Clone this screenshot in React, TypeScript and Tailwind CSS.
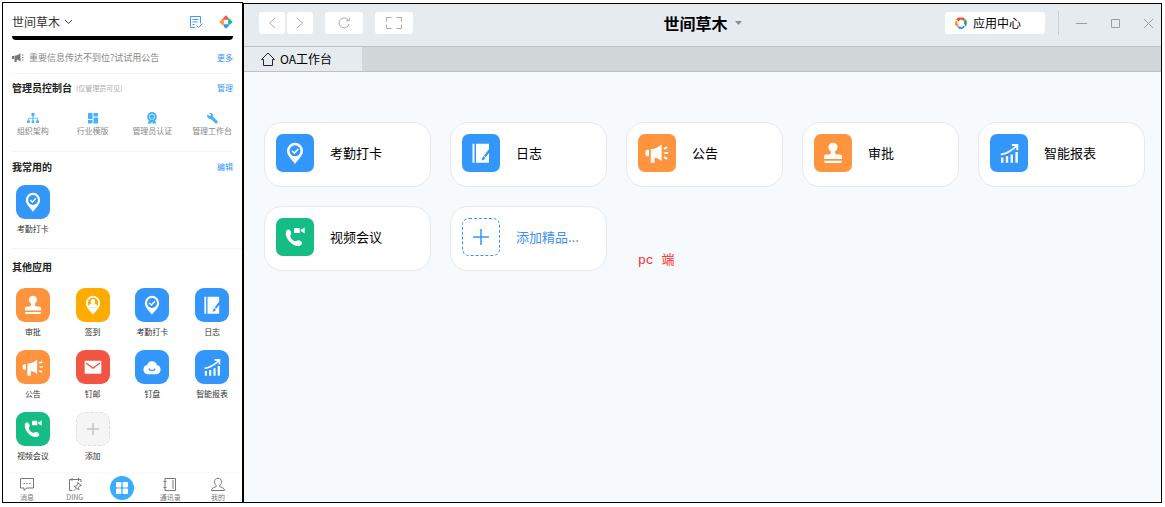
import React, { useState } from "react";

type AppKey =
  | "attendance"
  | "log"
  | "notice"
  | "approval"
  | "report"
  | "meeting"
  | "signin"
  | "mail"
  | "drive";

interface AppItem {
  key: AppKey;
  name: string;
}

const tileColors: Record<AppKey, string> = {
  attendance: "bg-[#3296fa]",
  log: "bg-[#3296fa]",
  report: "bg-[#3296fa]",
  drive: "bg-[#3296fa]",
  notice: "bg-[#ff943e]",
  approval: "bg-[#ff943e]",
  signin: "bg-[#ffab00]",
  mail: "bg-[#f25643]",
  meeting: "bg-[#15bc83]",
};

const pinPath = "M19 30c-3-4.5-8-8-8-13.2a8 8 0 0 1 16 0c0 5.2-5 8.7-8 13.2z";

const glyphs: Record<AppKey, React.ReactNode> = {
  attendance: (
    <>
      <path d={pinPath} fill="#fff" />
      <circle cx="19" cy="16.8" r="5.5" fill="#3296fa" />
      <path d="M16 16.8l2.3 2.3 4-4.2" fill="none" stroke="#fff" strokeWidth="1.5" />
    </>
  ),
  signin: (
    <>
      <path d={pinPath} fill="#fff" />
      <circle cx="19" cy="16.5" r="5.8" fill="#ffab00" />
      <circle cx="19" cy="14.8" r="2.5" fill="#fff" />
      <path d="M14.5 20.5c.6-3 2.3-3.7 4.5-3.7s3.900.7 4.500 3.700c-2.400 2.200-6.600 2.200-9 0z" fill="#fff" />
    </>
  ),
  log: (
    <>
      <path d="M10.5 9.800h2v19h-2zM14 9.800h13v19H14z" fill="#fff" />
      <path d="M27.5 14.500l-5.600 7.200 1.800 1.500 4.800-6.200z" fill="#3296fa" />
      <path d="M21.200 22.300l2.100 1.700c-.5 1.600-2 2.400-4 2.300 1.200-.8.8-2.700 1.900-4z" fill="#3296fa" />
    </>
  ),
  notice: (
    <>
      <path d="M11 15.8v6.4H9.500a2 2 0 0 1-2-2v-2.400a2 2 0 0 1 2-2z" fill="#fff" />
      <path d="M12.8 15.200c4.500-.2 7.700-2 10.800-4.700v16.700c-2.300-2-4.300-3.300-7-3.700v5.200h-3.800z" fill="#fff" />
      <path d="M26 14.800l3.300-1.700M26.500 19H30M26 23.200l3.300 1.700" stroke="#fff" strokeWidth="1.9" />
    </>
  ),
  approval: (
    <>
      <path
        d="M19 8.700a4.500 4.500 0 0 1 2.700 8.100c-.9.700-.8 2.900.4 3.800H26a2 2 0 0 1 2 2v2.500H10v-2.500a2 2 0 0 1 2-2h3.900c1.200-.9 1.300-3.100.4-3.800A4.500 4.500 0 0 1 19 8.700z"
        fill="#fff"
      />
      <path d="M10.300 26.800h17.400V28a1 1 0 0 1-1 1H11.300a1 1 0 0 1-1-1z" fill="#fff" />
    </>
  ),
  report: (
    <>
      <path d="M12.2 28.800v-5.200M17 28.800v-6.500M21.800 28.800v-8.300M26.600 28.800V18" stroke="#fff" strokeWidth="2.4" />
      <path d="M10.800 20.500c6.200-.9 11-4.100 15.500-8.400M21.800 11h5.500v5.200" fill="none" stroke="#fff" strokeWidth="1.9" />
    </>
  ),
  meeting: (
    <>
      <path
        d="M9.800 14.300c.2-1.600 1.500-2.800 2.800-2.700 1.300 0 2.400 1.900 2.700 3.500.3 1.500-1.200 2-1 3.300.4 2 2.800 4.300 4.800 4.800 1.400.3 2-1.200 3.500-.9 1.600.3 3.500 1.500 3.500 2.800s-1.400 2.700-3 2.900c-6.300.9-14-6.900-13.300-13.700z"
        fill="#fff"
      />
      <path d="M18 9.900h5.800v5H18zM24.800 11.800l3.900-2.400v6l-3.900-2.400z" fill="#fff" />
    </>
  ),
  mail: (
    <>
      <rect x="9.7" y="12" width="18.6" height="14.5" rx="1" fill="#fff" />
      <path d="M11.200 14.500L19 20.300l7.800-5.800" fill="none" stroke="#f25643" strokeWidth="1.5" />
    </>
  ),
  drive: (
    <>
      <path
        d="M13.600 16.800a5.600 5.600 0 0 1 10.800 0 5.300 5.300 0 0 1-.3 10.400H13.900a5.300 5.300 0 0 1-.3-10.400z"
        fill="#fff"
      />
      <path d="M15.500 20.800c1.300 3 5.700 3 7 0" fill="none" stroke="#3296fa" strokeWidth="1.5" />
    </>
  ),
};

const deskApps: AppItem[] = [
  { key: "attendance", name: "考勤打卡" },
  { key: "log", name: "日志" },
  { key: "notice", name: "公告" },
  { key: "approval", name: "审批" },
  { key: "report", name: "智能报表" },
  { key: "meeting", name: "视频会议" },
];

const otherApps: AppItem[] = [
  { key: "approval", name: "审批" },
  { key: "signin", name: "签到" },
  { key: "attendance", name: "考勤打卡" },
  { key: "log", name: "日志" },
  { key: "notice", name: "公告" },
  { key: "mail", name: "钉邮" },
  { key: "drive", name: "钉盘" },
  { key: "report", name: "智能报表" },
  { key: "meeting", name: "视频会议" },
];

const consoleItems = [
  {
    name: "组织架构",
    icon: (
      <path d="M4.500 1h3v3h-3zM5.500 4h1v1.700h4.200V8.500h1.300v2.500H9.200V8.500h.6V6.600H6.500v1.900h.8V11H4.700V8.500h.8V6.600H2.200v1.900h.6V11H0V8.500h1.300V5.700h4.200z" />
    ),
  },
  {
    name: "行业模版",
    icon: <path d="M1 1h4.500v6H1zM1 8h4.500v3.500H1zM6.500 1H11v3.500H6.500zM6.500 5.500H11v6H6.500z" />,
  },
  {
    name: "管理员认证",
    icon: (
      <>
        <path d="M3 7.500L1.800 12l2.100-.8 1.300.8.8-2.500.8 2.500 1.300-.8 2.100.8L9 7.500z" />
        <circle cx="6" cy="4.8" r="4.8" />
        <circle cx="6" cy="4.8" r="2.7" fill="none" stroke="#fff" strokeWidth=".6" />
      </>
    ),
  },
  {
    name: "管理工作台",
    icon: (
      <path d="M1.200 2.200L3.300 4l1.300-.2.300-1.300L3.200.9c1.900-.5 3.900.8 4 2.900l-.1 1 4.100 4a1.500 1.500 0 0 1-2.100 2.200l-4.300-4C2.600 7.500.6 5 1.200 2.200z" />
    ),
  },
];

const navItems = [
  {
    name: "消息",
    icon: (
      <>
        <path d="M1.500 1.500h13v9.500H8l-3 2.300V11H1.500z" />
        <path d="M4.500 6.500h1.400M7.300 6.500h1.400M10.100 6.500h1.400" />
      </>
    ),
  },
  {
    name: "DING",
    icon: (
      <>
        <path d="M5.500 13.500h-3V2.500h11.500v2.500M5 1v3M11.500 1v3" />
        <path d="M10.700 5.500l3.800 3-1.700.3-1.200 1.700.3 2.500-4.700-3.700 2.300-.4 1.200-1.700zM9.300 11.200l-2.300 2.500" />
      </>
    ),
  },
  { name: "", icon: null },
  {
    name: "通讯录",
    icon: <path d="M3 1.500h10.500v12H3zM11 3v9M1.500 4.500h3M1.500 10.500h3" />,
  },
  {
    name: "我的",
    icon: (
      <path d="M1.500 13.500h13c-.2-2.200-1.500-2.800-4.700-3.900V8.300c1.300-.9 1.800-2.100 1.800-3.500C11.600 2.600 10 1.300 8 1.300S4.400 2.600 4.400 4.800c0 1.400.5 2.600 1.800 3.500v1.300c-3.200 1.100-4.500 1.700-4.700 3.900z" />
    ),
  },
];

const AppTile: React.FC<{ app: AppKey; className: string }> = ({ app, className }) => (
  <span className={`block shrink-0 ${tileColors[app]} ${className}`}>
    <svg viewBox="0 0 38 38" className="h-full w-full" aria-hidden="true">
      {glyphs[app]}
    </svg>
  </span>
);

const MobileApp: React.FC<{ item: AppItem }> = ({ item }) => (
  <button className="flex flex-col items-center gap-1">
    <AppTile app={item.key} className="size-[34px] rounded-[9px]" />
    <span className="text-[8px] leading-3 text-[#333]">{item.name}</span>
  </button>
);

const MobilePanel: React.FC = () => {
  const [active, setActive] = useState(2);

  return (
    <section className="flex flex-col border border-black bg-white">
      <header className="flex h-[33px] items-center px-[9px] pt-1">
        <button className="flex items-center gap-1 text-xs leading-4 text-[#333]">
          世间草木
          <svg width="9" height="6" viewBox="0 0 9 6" fill="none" stroke="#444" aria-hidden="true">
            <path d="M1 1l3.500 3.500L8 1" />
          </svg>
        </button>
        <button className="ml-auto" aria-label="待办">
          <svg width="14" height="14" viewBox="0 0 14 14" fill="none" stroke="#3f9bf5" aria-hidden="true">
            <path d="M6 12.500H1.500v-11h10v7M3.500 4.500h6M3.500 7h5M3.500 9.500h2M7.500 10.500l2 2 4-4" />
          </svg>
        </button>
        <button className="ml-4" aria-label="应用中心">
          <svg width="14" height="14" viewBox="0 0 14 14" aria-hidden="true">
            <path d="M7 .3l2 2v2.500H2.500z" fill="#f25643" />
            <path d="M13.700 7l-2 2H9.200V2.500z" fill="#15bc83" />
            <path d="M7 13.700l-2-2V9.200h6.500z" fill="#3296fa" />
            <path d="M.3 7l2-2h2.500v6.500z" fill="#ff943e" />
          </svg>
        </button>
      </header>
      <div className="mx-[9px] h-1 rounded-b-[4px] bg-black" />

      <div className="mx-[9px] flex h-[34px] items-center border-b border-[#f2f3f4] pt-0.5">
        <svg width="13" height="9" viewBox="0 0 13 9" fill="#777" aria-hidden="true">
          <path d="M0 3h2v3H0zM2.500 2.700C5 2.500 6.500 1.500 8.500.2v8.300C7 7.500 6 6.800 4.700 6.500V9H2.500z" />
          <path d="M10 1.500h1.500v1H10zM10 4h1.500v1H10zM10 6.500h1.500v1H10z" />
        </svg>
        <p className="ml-1 text-[9px] leading-3 text-[#888]">重要信息传达不到位?试试用公告</p>
        <a href="#more" className="ml-auto text-[8px] leading-3 text-[#3296fa]">更多</a>
      </div>

      <div className="mx-[9px] flex h-7 items-center">
        <h2 className="text-[10px] leading-4 font-bold text-[#222]">管理员控制台</h2>
        <span className="ml-1 text-[7px] leading-3 text-[#aaa]">(仅管理员可见)</span>
        <a href="#manage" className="ml-auto text-[8px] leading-3 text-[#3296fa]">管理</a>
      </div>
      <div className="grid grid-cols-4 pt-2.5">
        {consoleItems.map((item) => (
          <button key={item.name} className="flex flex-col items-center gap-px">
            <svg width="12" height="12" viewBox="0 0 12 12" fill="#43b3fa" aria-hidden="true">
              {item.icon}
            </svg>
            <span className="text-[8px] leading-3 text-[#888]">{item.name}</span>
          </button>
        ))}
      </div>

      <div className="mx-[9px] mt-3.5 flex h-[30px] items-center border-t border-[#f2f3f4]">
        <h2 className="text-[10px] leading-4 font-bold text-[#222]">我常用的</h2>
        <a href="#edit" className="ml-auto text-[8px] leading-3 text-[#3296fa]">编辑</a>
      </div>
      <div className="grid grid-cols-4 pt-1">
        <MobileApp item={{ key: "attendance", name: "考勤打卡" }} />
      </div>

      <div className="mt-[13px] ml-[9px] flex h-9 items-center border-t border-[#f2f3f4]">
        <h2 className="text-[10px] leading-4 font-bold text-[#222]">其他应用</h2>
      </div>
      <div className="grid grid-cols-4 gap-y-3 pt-1">
        {otherApps.map((item) => (
          <MobileApp key={item.name} item={item} />
        ))}
        <button className="flex flex-col items-center gap-1">
          <span className="flex size-[34px] items-center justify-center rounded-[9px] border border-dashed border-[#ddd] bg-[#f5f5f5]">
            <svg width="14" height="14" viewBox="0 0 14 14" stroke="#c4c4c4" strokeWidth="1.5" aria-hidden="true">
              <path d="M7 1v12M1 7h12" />
            </svg>
          </span>
          <span className="text-[8px] leading-3 text-[#333]">添加</span>
        </button>
      </div>

      <nav className="mt-auto grid grid-cols-5 border-t border-[#fafafa]">
        {navItems.map((item, index) =>
          item.icon ? (
            <button
              key={index}
              onClick={() => setActive(index)}
              className={`flex flex-col items-center pt-1 text-[7px] leading-[10px] ${
                active === index ? "text-[#3296fa]" : "text-[#777]"
              }`}
            >
              <svg width="16" height="15" viewBox="0 0 16 15" fill="none" stroke="currentColor" aria-hidden="true">
                {item.icon}
              </svg>
              {item.name}
            </button>
          ) : (
            <button
              key={index}
              onClick={() => setActive(index)}
              aria-label="工作台"
              className="flex items-center justify-center"
            >
              <span className="flex size-6 items-center justify-center rounded-full bg-[#38adff]">
                <svg width="12" height="12" viewBox="0 0 12 12" fill="#fff" aria-hidden="true">
                  <rect width="5.4" height="5.4" rx=".8" />
                  <rect x="6.6" width="5.4" height="5.4" rx=".8" />
                  <rect y="6.6" width="5.4" height="5.4" rx=".8" />
                  <rect x="6.6" y="6.6" width="5.4" height="5.4" rx=".8" />
                </svg>
              </span>
            </button>
          )
        )}
      </nav>
    </section>
  );
};

const toolButton = "flex h-[22px] items-center justify-center rounded-[3px] bg-white";

const DesktopPanel: React.FC = () => (
  <section className="mt-px flex flex-col border border-black bg-[#f6fafd]">
    <header className="grid h-[42px] grid-cols-[1fr_auto_1fr] items-center bg-[#e6ebef] pb-1">
      <div className="flex items-center pl-[15px]">
        <button className={`${toolButton} w-[26px]`} aria-label="后退">
          <svg width="8" height="12" viewBox="0 0 8 12" fill="none" stroke="#aaa" aria-hidden="true">
            <path d="M7 1L1.500 6 7 11" />
          </svg>
        </button>
        <button className={`${toolButton} ml-0.5 w-[26px]`} aria-label="前进">
          <svg width="8" height="12" viewBox="0 0 8 12" fill="none" stroke="#aaa" aria-hidden="true">
            <path d="M1 1l5.500 5L1 11" />
          </svg>
        </button>
        <button className={`${toolButton} ml-3 w-[38px]`} aria-label="刷新">
          <svg width="12" height="12" viewBox="0 0 12 12" fill="none" stroke="#aaa" aria-hidden="true">
            <path d="M11 7A5 5 0 1 1 10 2.800M11.200.5v3.300H8" />
          </svg>
        </button>
        <button className={`${toolButton} ml-3 w-[38px]`} aria-label="全屏">
          <svg width="16" height="12" viewBox="0 0 16 12" fill="none" stroke="#aaa" aria-hidden="true">
            <path d="M5.500.5h-5v4M10.500.5h5v4M.5 7.500v4h5M15.500 7.500v4h-5" />
          </svg>
        </button>
      </div>
      <button className="flex items-center gap-[7px] text-base leading-5 font-bold text-black">
        世间草木
        <svg width="7" height="4" viewBox="0 0 7 4" fill="#888e94" aria-hidden="true">
          <path d="M0 0h7L3.500 4z" />
        </svg>
      </button>
      <div className="flex items-center justify-end pr-[7px]">
        <button className="flex h-[22px] w-[100px] items-center gap-[5px] rounded-[3px] bg-white pl-[9px] text-xs text-black">
          <svg width="14" height="14" viewBox="0 0 14 14" aria-hidden="true">
            <path d="M4 1.500h5.500l2 2.800H8L6.800 3.300 4.500 5.500 2.300 3.500z" fill="#ec4a3a" />
            <path d="M10 2l2.700 2.800v4l-2 2.200V8.500l-1-1.300L10.500 6 9 4.500h2.500z" fill="#15a866" />
            <path d="M10.800 11l-2.300 2H5.200l-2-2.500h3L7.500 11.500l2-2z" fill="#3296fa" />
            <path d="M1.500 4.500l2.300 1.300-.5 2 1.500 1L4.500 10 3 11 .8 8.500z" fill="#ff943e" />
          </svg>
          应用中心
        </button>
        <span className="ml-[13px] h-6 w-px bg-[#cbd0d4]" />
        <button className="ml-[17px]" aria-label="最小化">
          <svg width="11" height="11" viewBox="0 0 11 11" stroke="#999ea3" aria-hidden="true">
            <path d="M0 5.500h11" />
          </svg>
        </button>
        <button className="ml-[23px]" aria-label="最大化">
          <svg width="11" height="11" viewBox="0 0 11 11" fill="none" stroke="#999ea3" aria-hidden="true">
            <path d="M1.500 1.500h8v8h-8z" />
          </svg>
        </button>
        <button className="ml-[22px]" aria-label="关闭">
          <svg width="11" height="11" viewBox="0 0 11 11" stroke="#999ea3" aria-hidden="true">
            <path d="M1 1l9 9M10 1l-9 9" />
          </svg>
        </button>
      </div>
    </header>

    <div className="flex h-[26px] border-y border-[#bcc1c4] bg-[#d2d7da]">
      <a href="#oa" className="flex w-[118px] items-center gap-[5px] bg-[#e6ebef] pl-[17px] text-xs text-black">
        <svg width="14" height="14" viewBox="0 0 14 14" fill="none" stroke="#223" aria-hidden="true">
          <path d="M.5 7.500L7 1l6.500 6.500h-2v6h-9v-6z" />
        </svg>
        OA工作台
      </a>
    </div>

    <div className="grid grid-cols-[167fr_157fr_157fr_157fr_167fr] gap-[19px] px-5 pt-[50px] pr-4">
      {deskApps.map((item) => (
        <button
          key={item.key}
          className="flex h-[65px] items-center gap-4 rounded-[18px] border border-[#e5e9ed] bg-white pb-[3px] pl-[11px] text-[13px] text-black"
        >
          <AppTile app={item.key} className="size-[38px] rounded-[7px]" />
          {item.name}
        </button>
      ))}
      <button className="flex h-[65px] items-center gap-4 rounded-[18px] border border-[#e5e9ed] bg-white pb-[3px] pl-[11px] text-[13px] text-[#3f8ff5]">
        <span className="flex size-[38px] items-center justify-center rounded-[7px] border border-dashed border-[#3296fa]">
          <svg width="18" height="18" viewBox="0 0 18 18" stroke="#3296fa" strokeWidth="1.5" aria-hidden="true">
            <path d="M9 1v16M1 9h16" />
          </svg>
        </span>
        添加精品...
      </button>
      <p className="self-end pb-0.5 pl-3 font-['Liberation_Mono','Noto_Sans_CJK_SC',monospace] text-[13px] leading-4 text-[#ff2a2a]">
        pc 端
      </p>
    </div>
  </section>
);

const App: React.FC = () => {
  return (
    <main className="grid min-h-screen grid-cols-[241fr_919fr] bg-white pt-0.5 pr-[3px] pb-1 pl-0.5 font-['Noto_Sans_CJK_SC',sans-serif]">
      <MobilePanel />
      <DesktopPanel />
    </main>
  );
};

export default App;
